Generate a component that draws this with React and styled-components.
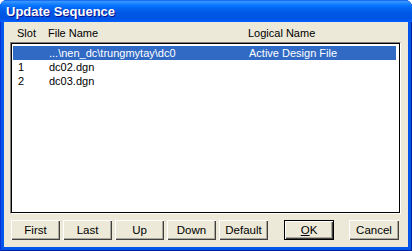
import styled, { createGlobalStyle } from "styled-components";

const GlobalStyle = createGlobalStyle`
  html, body {
    margin: 0;
    padding: 0;
    background: #ffffff;
  }
  body {
    font-family: "Liberation Sans", Arial, sans-serif;
  }
`;

const Window = styled.div`
  width: 412px;
  height: 251px;
  box-sizing: border-box;
  display: flex;
  flex-direction: column;
  background: #0055ea;
  border-radius: 7px 7px 0 0;
  overflow: hidden;
  box-shadow: inset 1px 0 #0831d9, inset -1px 0 #001ea0, inset 0 -1px #001ea0;
`;

const TitleBar = styled.div`
  height: 22px;
  flex: none;
  box-sizing: border-box;
  padding: 4px 0 0 6px;
  line-height: 16px;
  font: bold 13px "Liberation Sans", Arial, sans-serif;
  color: #ffffff;
  text-shadow: 1px 1px #0f1089;
  background: linear-gradient(
    to bottom,
    #0058ee 0%,
    #3a93ff 6%,
    #288eff 12%,
    #127dff 20%,
    #036ffc 30%,
    #0262ee 42%,
    #0057e5 60%,
    #0054e3 78%,
    #0055eb 90%,
    #005bff 96%,
    #0061ff 100%
  );
`;

const Client = styled.div`
  flex: 1;
  margin: 0 4px 4px;
  background: #ece9d8;
  display: flex;
  flex-direction: column;
  padding: 4px 7px 6px 6px;
  font-size: 11px;
  color: #000000;
`;

const Columns = styled.div`
  display: grid;
  grid-template-columns: 31px 200px 1fr;
  height: 14px;
  line-height: 14px;
  padding-left: ${({ $indent }) => $indent}px;
  white-space: nowrap;
`;

const Header = styled(Columns)`
  margin-bottom: 2px;
`;

const ListBox = styled.div`
  height: 172px;
  box-sizing: border-box;
  background: #ffffff;
  border: 1px solid;
  border-color: #808080 #ffffff #ffffff #808080;
  box-shadow: inset 1px 1px #000000, inset -1px -1px #000000;
  padding: 3px 4px 0 2px;
`;

const Row = styled(Columns)`
  background: ${({ $selected }) => ($selected ? "#316ac5" : "transparent")};
  color: ${({ $selected }) => ($selected ? "#ffffff" : "#000000")};
`;

const ButtonBar = styled.div`
  display: flex;
  margin-top: 6px;
  padding-left: 1px;
  gap: 3px;
`;

const Button = styled.button`
  width: ${({ $w }) => $w || 49}px;
  height: 20px;
  margin-left: ${({ $gap }) => $gap || 0}px;
  padding: 0;
  background: #ece9d8;
  border: none;
  font: 11.5px "Liberation Sans", Arial, sans-serif;
  color: #000000;
  box-shadow: ${({ $default }) =>
    $default
      ? "inset 0 0 0 1px #000, inset 2px 2px #fff, inset -2px -2px #404040, inset -3px -3px #aca899"
      : "inset 1px 1px #fff, inset -1px -1px #404040, inset -2px -2px #aca899"};

  u {
    text-decoration: underline;
  }
`;

const rows = [
  { slot: "", file: "...\\nen_dc\\trungmytay\\dc0", logical: "Active Design File", selected: true },
  { slot: "1", file: "dc02.dgn", logical: "" },
  { slot: "2", file: "dc03.dgn", logical: "" },
];

export default function App() {
  return (
    <>
      <GlobalStyle />
      <Window>
        <TitleBar>Update Sequence</TitleBar>
        <Client>
          <Header $indent={7}>
            <span>Slot</span>
            <span>File Name</span>
            <span>Logical Name</span>
          </Header>
          <ListBox>
            {rows.map((r, i) => (
              <Row key={i} $indent={5} $selected={r.selected}>
                <span>{r.slot}</span>
                <span>{r.file}</span>
                <span>{r.logical}</span>
              </Row>
            ))}
          </ListBox>
          <ButtonBar>
            <Button>First</Button>
            <Button>Last</Button>
            <Button>Up</Button>
            <Button>Down</Button>
            <Button>Default</Button>
            <Button $w={50} $gap={13} $default>
              <u>O</u>K
            </Button>
            <Button $w={50} $gap={12}>Cancel</Button>
          </ButtonBar>
        </Client>
      </Window>
    </>
  );
}
